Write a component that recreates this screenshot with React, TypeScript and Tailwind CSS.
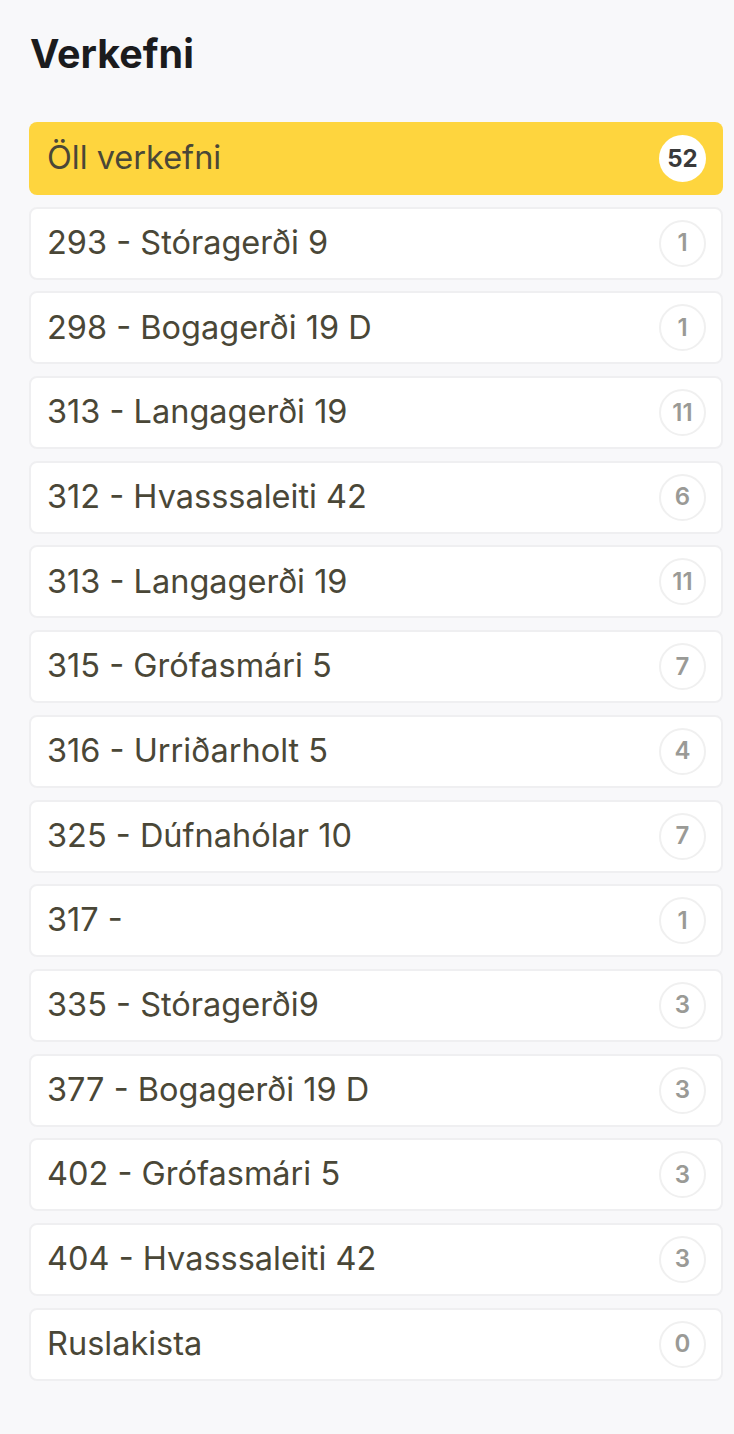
import React from "react";

const items: [string, number][] = [
  ["293 - Stóragerði 9", 1],
  ["298 - Bogagerði 19 D", 1],
  ["313 - Langagerði 19", 11],
  ["312 - Hvasssaleiti 42", 6],
  ["313 - Langagerði 19", 11],
  ["315 - Grófasmári 5", 7],
  ["316 - Urriðarholt 5", 4],
  ["325 - Dúfnahólar 10", 7],
  ["317 -", 1],
  ["335 - Stóragerði9", 3],
  ["377 - Bogagerði 19 D", 3],
  ["402 - Grófasmári 5", 3],
  ["404 - Hvasssaleiti 42", 3],
  ["Ruslakista", 0],
];

export default function App() {
  return (
    <div
      className="min-h-[1434px] w-[734px] bg-[#f8f8fa] pl-[29px] pr-[11px] pt-[30px]"
      style={{ fontFamily: "Inter, 'Noto Sans', sans-serif" }}
    >
      <h1 className="text-[39.5px] font-bold leading-[48px] text-[#1b1b1d] pl-[1px]">Verkefni</h1>
      <div className="mt-[44px] flex flex-col gap-[11.7px]">
        <div className="flex h-[73px] items-center justify-between rounded-[8px] bg-[#fed53e] pl-[18px] pr-[17px]">
          <span className="text-[32.5px] text-[#4a4737]">Öll verkefni</span>
          <span className="flex h-[47px] w-[47px] items-center justify-center rounded-full bg-white text-[24px] font-bold text-[#3a3a3a]">
            52
          </span>
        </div>
        {items.map(([label, n], i) => (
          <div
            key={i}
            className="flex h-[73px] items-center justify-between rounded-[8px] border-2 border-[#efeff1] bg-white pl-[16px] pr-[15px]"
          >
            <span className="text-[32.5px] text-[#4a4737]">{label}</span>
            <span className="flex h-[47px] w-[47px] items-center justify-center rounded-full border-2 border-[#f0f0f0] bg-white text-[24px] font-semibold text-[#9a9a96]">
              {n}
            </span>
          </div>
        ))}
      </div>
    </div>
  );
}
